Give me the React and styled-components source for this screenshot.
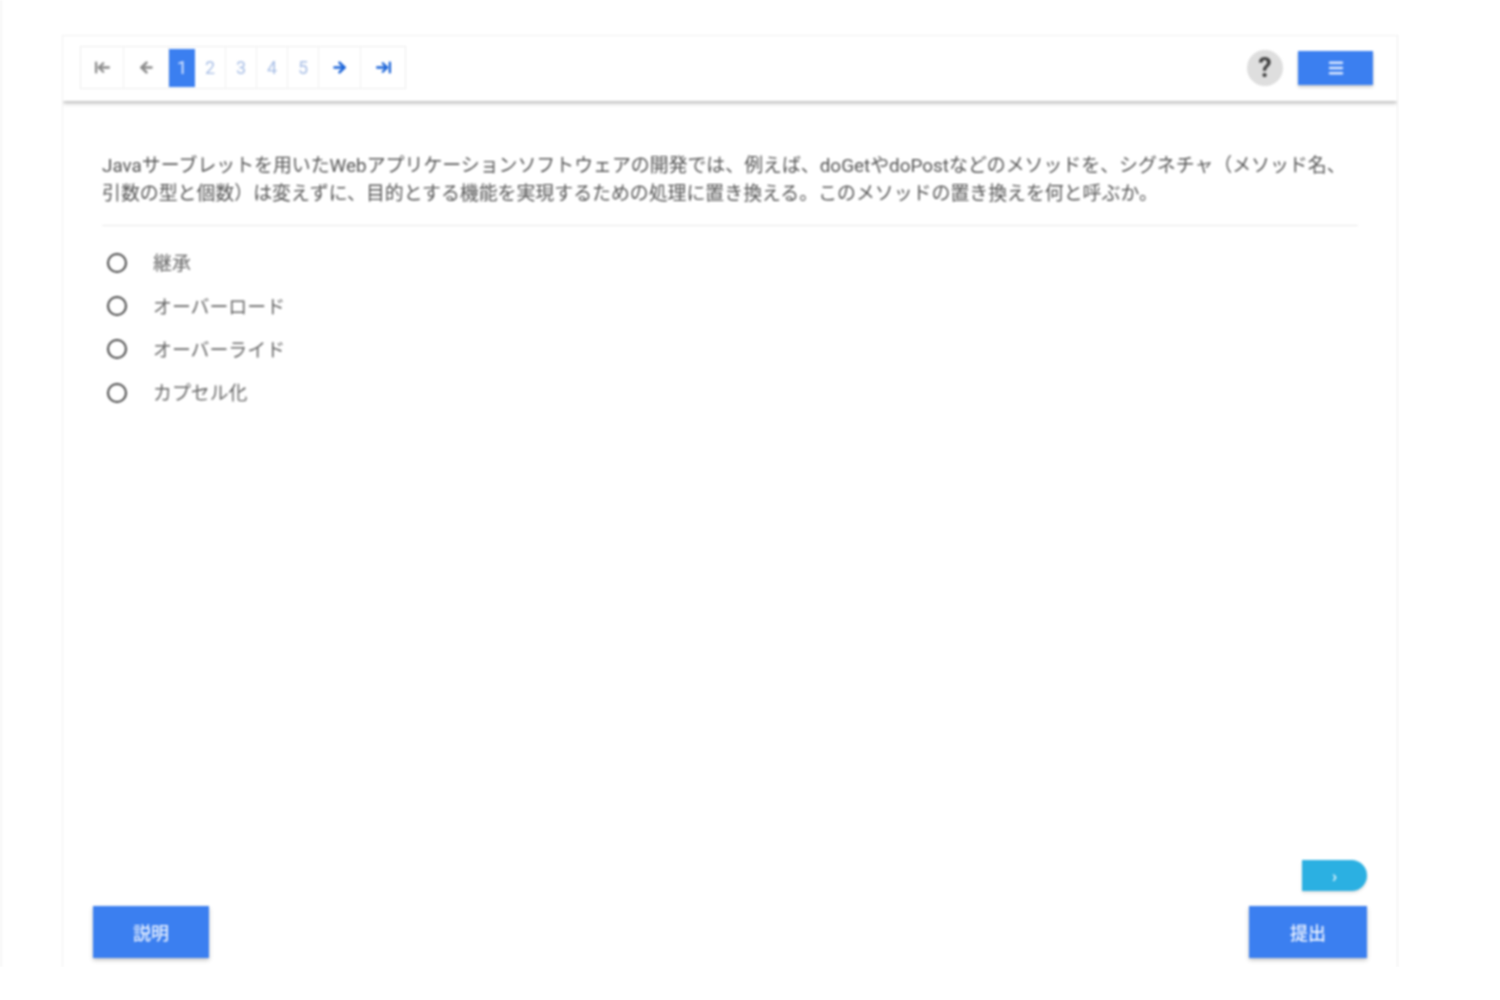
import React from 'react';
import styled, { createGlobalStyle } from 'styled-components';
import { ArrowLeftToLine, ArrowLeft, ArrowRight, ArrowRightToLine, Menu } from 'lucide-react';

const blue = '#3b7ff0';

const GlobalStyle = createGlobalStyle`
  html, body {
    margin: 0;
    padding: 0;
    background: #fff;
    font-family: "Roboto", "Noto Sans CJK JP", sans-serif;
  }
`;

const Page = styled.div`
  box-sizing: border-box;
  width: 1500px;
  height: 967px;
  padding: 35px 102px 0 62px;
  border-left: 2px solid #f6f6f6;
  filter: blur(0.8px);
`;

const Card = styled.div`
  box-sizing: border-box;
  margin-left: -2px;
  height: 100%;
  display: flex;
  flex-direction: column;
  overflow: hidden;
  border-left: 1px solid #f0f0f0;
  border-right: 1px solid #ececec;
  border-top: 1px solid #f0f0f0;
`;

const Header = styled.header`
  flex: none;
  box-sizing: border-box;
  height: 65px;
  padding: 0 24px 2px 17px;
  display: flex;
  align-items: center;
  justify-content: space-between;
  box-shadow: 0 2px 4px rgba(0, 0, 0, 0.3);
  position: relative;
`;

const Pager = styled.nav`
  display: flex;
  height: 41px;
  border: 1px solid #eeeeee;
`;

const PagerCell = styled.div`
  box-sizing: border-box;
  width: ${props => props.$width}px;
  display: flex;
  align-items: center;
  justify-content: center;
  border-right: ${props => (props.$last ? 'none' : '1px solid #f0f0f0')};
  color: ${props => props.$color};
  font-size: 18px;
`;

const ActiveCell = styled(PagerCell)`
  background: ${blue};
  color: #dbe8ff;
  height: 38px;
  align-self: center;
  border-right: none;
`;

const HeaderActions = styled.div`
  display: flex;
  align-items: center;
  gap: 15px;
`;

const HelpButton = styled.div`
  width: 36px;
  height: 36px;
  border-radius: 50%;
  background: #dedede;
  color: #444;
  font-size: 27px;
  font-weight: 700;
  display: flex;
  align-items: center;
  justify-content: center;
`;

const MenuButton = styled.div`
  width: 75px;
  height: 34px;
  background: ${blue};
  color: #dbe8ff;
  display: flex;
  align-items: center;
  justify-content: center;
  box-shadow: 0 2px 3px rgba(0, 0, 0, 0.22);
`;

const Body = styled.main`
  flex: 1;
  padding: 51px 39px 0 39px;
`;

const Question = styled.p`
  margin: 0;
  padding-bottom: 17px;
  border-bottom: 1px solid #e8e8e8;
  color: #555;
  font-size: 18.9px;
  line-height: 28px;
`;

const Choices = styled.div`
  margin-top: 15px;
  display: flex;
  flex-direction: column;
`;

const Choice = styled.label`
  height: 43.4px;
  display: flex;
  align-items: center;
  gap: 26px;
  padding-left: 5px;
  color: #666;
  font-size: 18.9px;
`;

const ChoiceText = styled.span`
  padding-bottom: 2px;
`;

const Radio = styled.span`
  box-sizing: border-box;
  width: 20px;
  height: 20px;
  border: 2.5px solid #444;
  border-radius: 50%;
`;

const Footer = styled.footer`
  flex: none;
  padding: 0 30px 9px 30px;
  display: flex;
  justify-content: space-between;
  align-items: flex-end;
`;

const ActionButton = styled.div`
  width: ${props => props.$width}px;
  height: 52px;
  background: ${blue};
  color: #eef4ff;
  font-size: 18px;
  font-weight: 500;
  display: flex;
  align-items: center;
  justify-content: center;
  box-shadow: 0 2px 4px rgba(0, 0, 0, 0.25);
`;

const RightActions = styled.div`
  display: flex;
  flex-direction: column;
  align-items: flex-end;
  gap: 15px;
`;

const NextPill = styled.div`
  width: 65px;
  height: 31px;
  background: #2bb0e2;
  color: #e4f6fd;
  font-size: 17px;
  font-weight: 700;
  border-radius: 0 16px 16px 0;
  display: flex;
  align-items: center;
  justify-content: center;
  box-shadow: 0 2px 3px rgba(0, 0, 0, 0.12);
`;

const choices = ['継承', 'オーバーロード', 'オーバーライド', 'カプセル化'];

const App = () => (
  <Page>
    <GlobalStyle />
    <Card>
      <Header>
        <Pager>
          <PagerCell $width={43} $color="#8a8a8a">
            <ArrowLeftToLine size={17} strokeWidth={3.2} />
          </PagerCell>
          <PagerCell $width={45} $color="#8a8a8a">
            <ArrowLeft size={17} strokeWidth={3.6} />
          </PagerCell>
          <ActiveCell $width={26}>1</ActiveCell>
          {[2, 3, 4, 5].map(n => (
            <PagerCell key={n} $width={31} $color="#a9bfe6">
              {n}
            </PagerCell>
          ))}
          <PagerCell $width={42} $color="#1a63d8">
            <ArrowRight size={17} strokeWidth={3.6} />
          </PagerCell>
          <PagerCell $width={44} $color="#1a63d8" $last>
            <ArrowRightToLine size={17} strokeWidth={3.2} />
          </PagerCell>
        </Pager>
        <HeaderActions>
          <HelpButton>?</HelpButton>
          <MenuButton>
            <Menu size={18} strokeWidth={3.2} />
          </MenuButton>
        </HeaderActions>
      </Header>
      <Body>
        <Question>
          Javaサーブレットを用いたWebアプリケーションソフトウェアの開発では、例えば、doGetやdoPostなどのメソッドを、シグネチャ（メソッド名、引数の型と個数）は変えずに、目的とする機能を実現するための処理に置き換える。このメソッドの置き換えを何と呼ぶか。
        </Question>
        <Choices>
          {choices.map(text => (
            <Choice key={text}>
              <Radio />
              <ChoiceText>{text}</ChoiceText>
            </Choice>
          ))}
        </Choices>
      </Body>
      <Footer>
        <ActionButton $width={116}>説明</ActionButton>
        <RightActions>
          <NextPill>›</NextPill>
          <ActionButton $width={118}>提出</ActionButton>
        </RightActions>
      </Footer>
    </Card>
  </Page>
);

export default App;
